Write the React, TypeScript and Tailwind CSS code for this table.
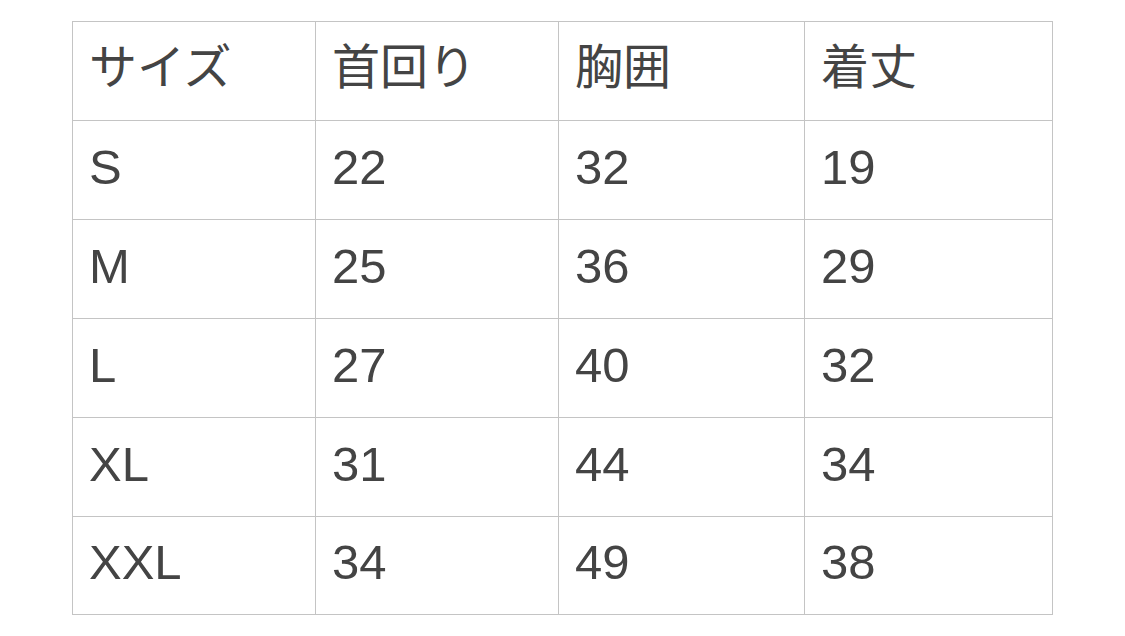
const header = ["サイズ", "首回り", "胸囲", "着丈"];

const rows = [
  ["S", "22", "32", "19"],
  ["M", "25", "36", "29"],
  ["L", "27", "40", "32"],
  ["XL", "31", "44", "34"],
  ["XXL", "34", "49", "38"],
];

export default function App() {
  return (
    <div className="w-[1125px] h-[636px] bg-white pt-[21px] pl-[72px] font-['Liberation_Sans','Noto_Sans_CJK_JP',sans-serif] text-[#444]">
      <table className="border-collapse table-fixed w-[980px] text-[49px] leading-none">
        <colgroup>
          <col className="w-[243px]" />
          <col className="w-[243px]" />
          <col className="w-[246px]" />
          <col className="w-[248px]" />
        </colgroup>
        <thead>
          <tr className="h-[99px]">
            {header.map((h) => (
              <th
                key={h}
                className="border border-[#c4c4c4] pl-[16px] pb-[6px] text-left font-normal align-middle text-[48px]"
              >
                {h}
              </th>
            ))}
          </tr>
        </thead>
        <tbody>
          {rows.map((r, ri) => (
            <tr key={r[0]} className={ri === rows.length - 1 ? "h-[98px]" : "h-[99px]"}>
              {r.map((c, i) => (
                <td
                  key={i}
                  className="border border-[#c4c4c4] pl-[16px] pb-[6px] align-middle"
                >
                  {c}
                </td>
              ))}
            </tr>
          ))}
        </tbody>
      </table>
    </div>
  );
}
